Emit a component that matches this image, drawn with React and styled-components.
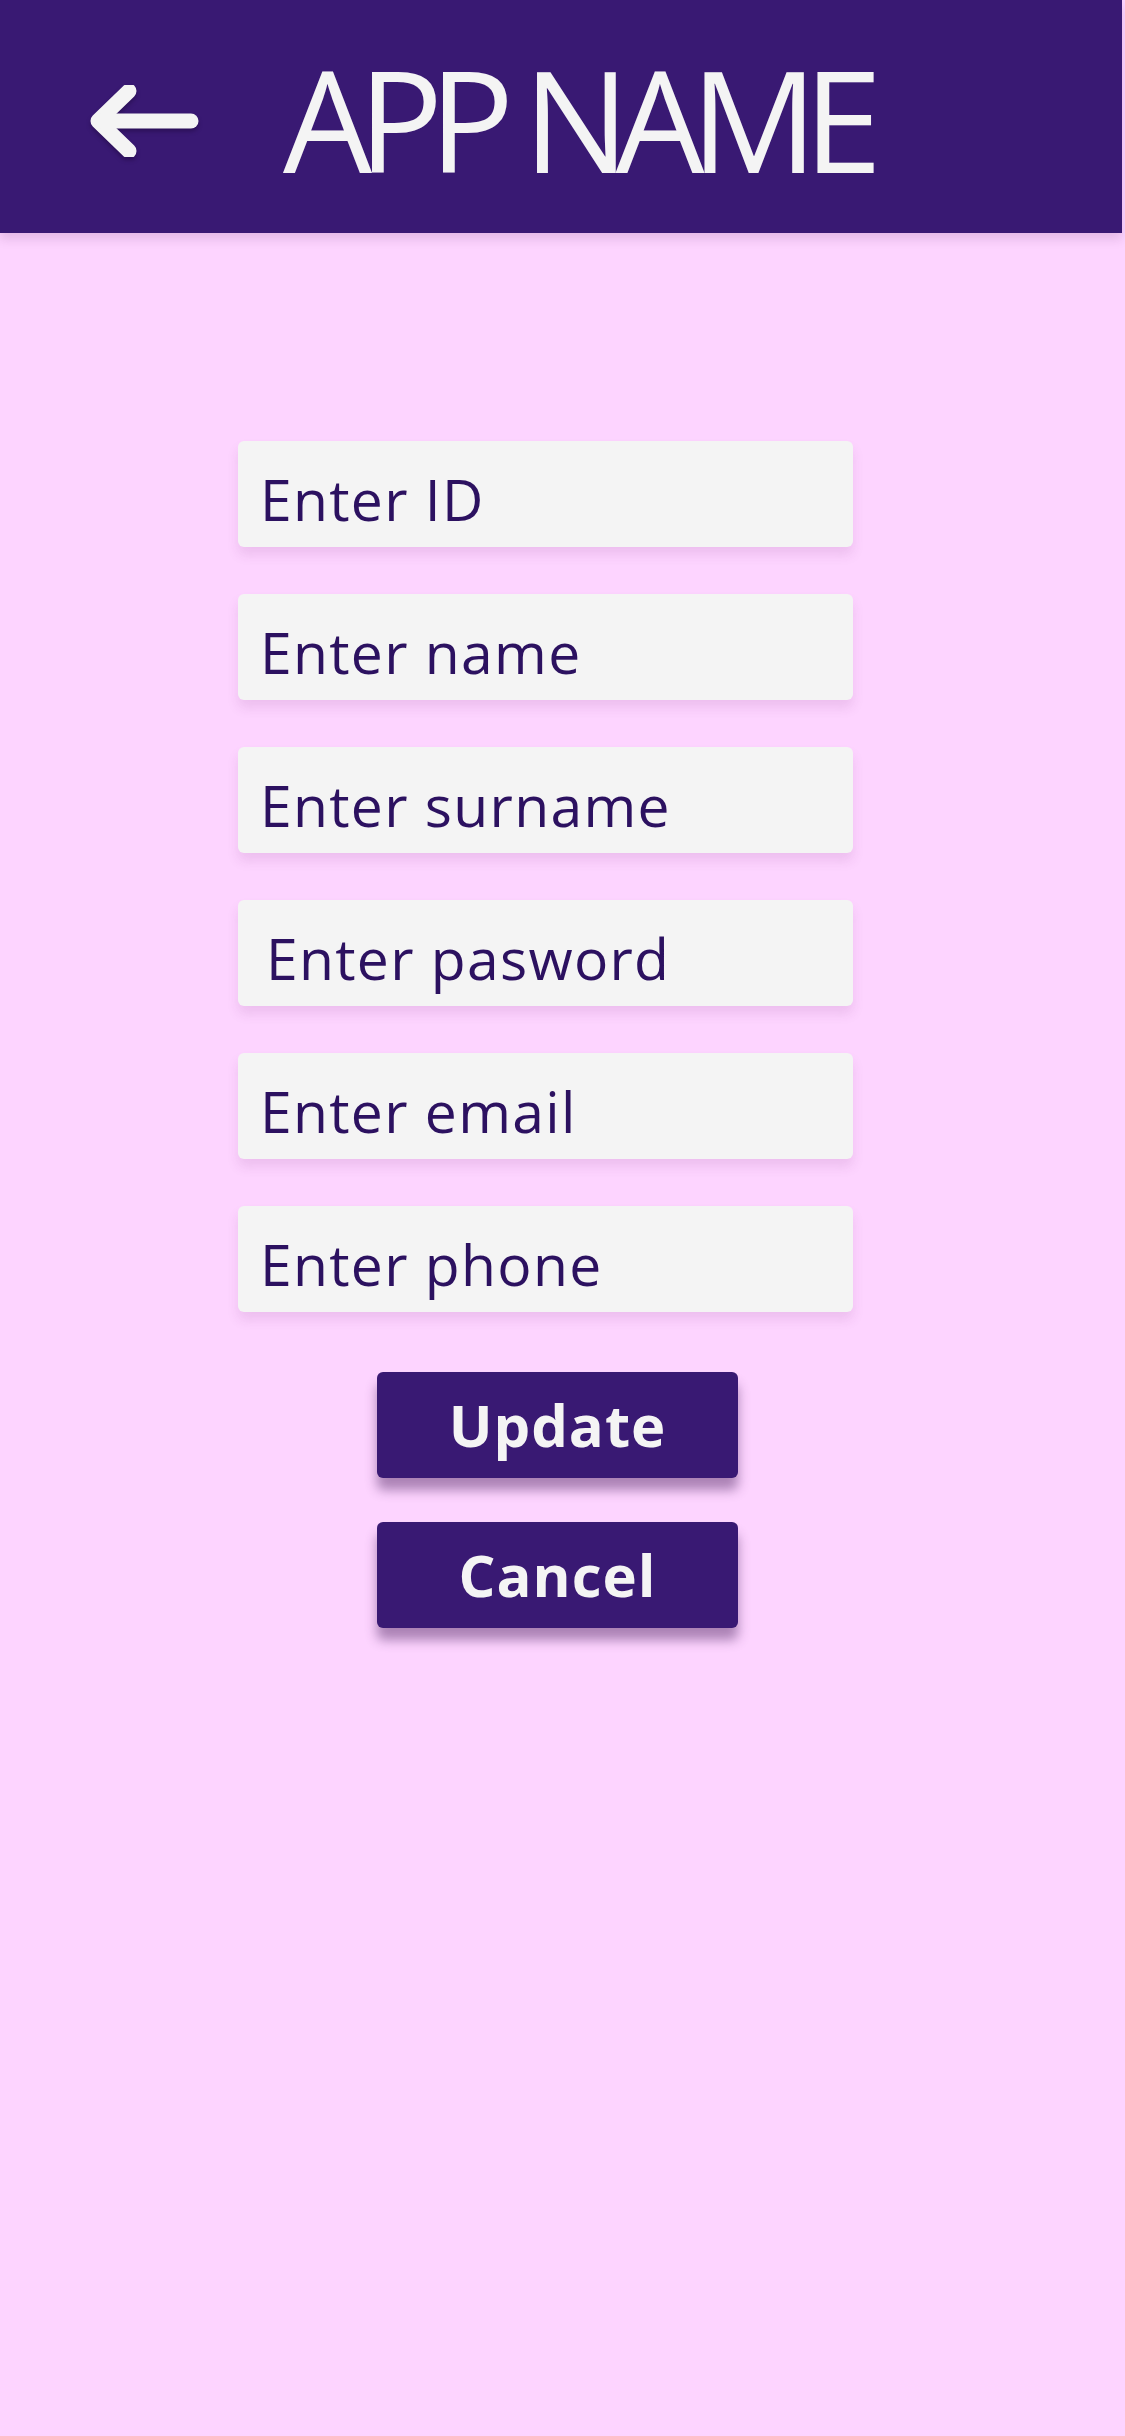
import styled, { createGlobalStyle } from 'styled-components'

const GlobalStyle = createGlobalStyle`
    body {
        margin: 0;
        background-color: #fdd4ff;
        font-family: "Open Sans", "Noto Sans", sans-serif;
    }
`

const Page = styled.div`
    min-height: 2436px;
    background-color: #fdd4ff;
`

const Header = styled.header`
    height: 233px;
    margin-right: 3px;
    background-color: #391973;
    display: flex;
    align-items: center;
    box-shadow: 0 6px 10px rgba(80, 30, 90, 0.15);
`

const BackButton = styled.div`
    width: 110px;
    height: 72px;
    margin: 9px 0 0 89px;
    display: flex;
    cursor: pointer;
    filter: drop-shadow(0 3px 2px rgba(20, 0, 40, 0.35));
`

const Title = styled.h1`
    margin: 3px 0 0 84px;
    font-size: 141px;
    line-height: 1;
    font-weight: 400;
    letter-spacing: -0.098em;
    color: #f4f4f4;
`

const Form = styled.form`
    margin-top: 208px;
    padding-left: 238px;
    display: flex;
    flex-direction: column;
    gap: 47px;
`

const Field = styled.input`
    box-sizing: border-box;
    width: 615px;
    height: 106px;
    padding: 29px 20px 20px ${p => p.$indent || 22}px;
    border: none;
    outline: none;
    border-radius: 6px;
    background-color: #f4f4f4;
    box-shadow: 0 8px 12px rgba(120, 40, 120, 0.12);
    font-family: "Open Sans", sans-serif;
    font-size: 57px;
    line-height: 57px;
    letter-spacing: 1.3px;
    color: #2c1160;

    &::placeholder {
        color: #2c1160;
        opacity: 1;
    }
`

const Actions = styled.div`
    margin: 13px 0 0 139px;
    display: flex;
    flex-direction: column;
    gap: 44px;
`

const Button = styled.button`
    width: 361px;
    height: 106px;
    border: none;
    border-radius: 6px;
    background-color: #391973;
    color: #f4f4f4;
    font-family: "Open Sans", sans-serif;
    font-size: 58px;
    font-weight: 700;
    letter-spacing: 1px;
    line-height: 1;
    display: flex;
    align-items: center;
    justify-content: center;
    box-shadow: 0 12px 12px rgba(70, 30, 90, 0.45);
    cursor: pointer;
`

const fields = [
    { name: 'id', label: 'Enter ID' },
    { name: 'name', label: 'Enter name' },
    { name: 'surname', label: 'Enter surname' },
    { name: 'password', label: 'Enter pasword', indent: 28 },
    { name: 'email', label: 'Enter email' },
    { name: 'phone', label: 'Enter phone' },
]

const App = () => {
  return (
    <Page>
      <GlobalStyle />
      <Header>
        <BackButton>
          <svg width="110" height="72" viewBox="0 0 110 72" fill="none">
            <path d="M40 6 L9 36 L40 66" stroke="#f4f4f4" strokeWidth="15" strokeLinecap="round" strokeLinejoin="round" />
            <path d="M12 36 H102" stroke="#f4f4f4" strokeWidth="15" strokeLinecap="round" />
          </svg>
        </BackButton>
        <Title>APP NAME</Title>
      </Header>

      <Form onSubmit={e => e.preventDefault()}>
        {fields.map(f => (
          <Field key={f.name} name={f.name} placeholder={f.label} $indent={f.indent} />
        ))}
        <Actions>
          <Button type="submit">Update</Button>
          <Button type="button">Cancel</Button>
        </Actions>
      </Form>
    </Page>
  )
}

export default App
